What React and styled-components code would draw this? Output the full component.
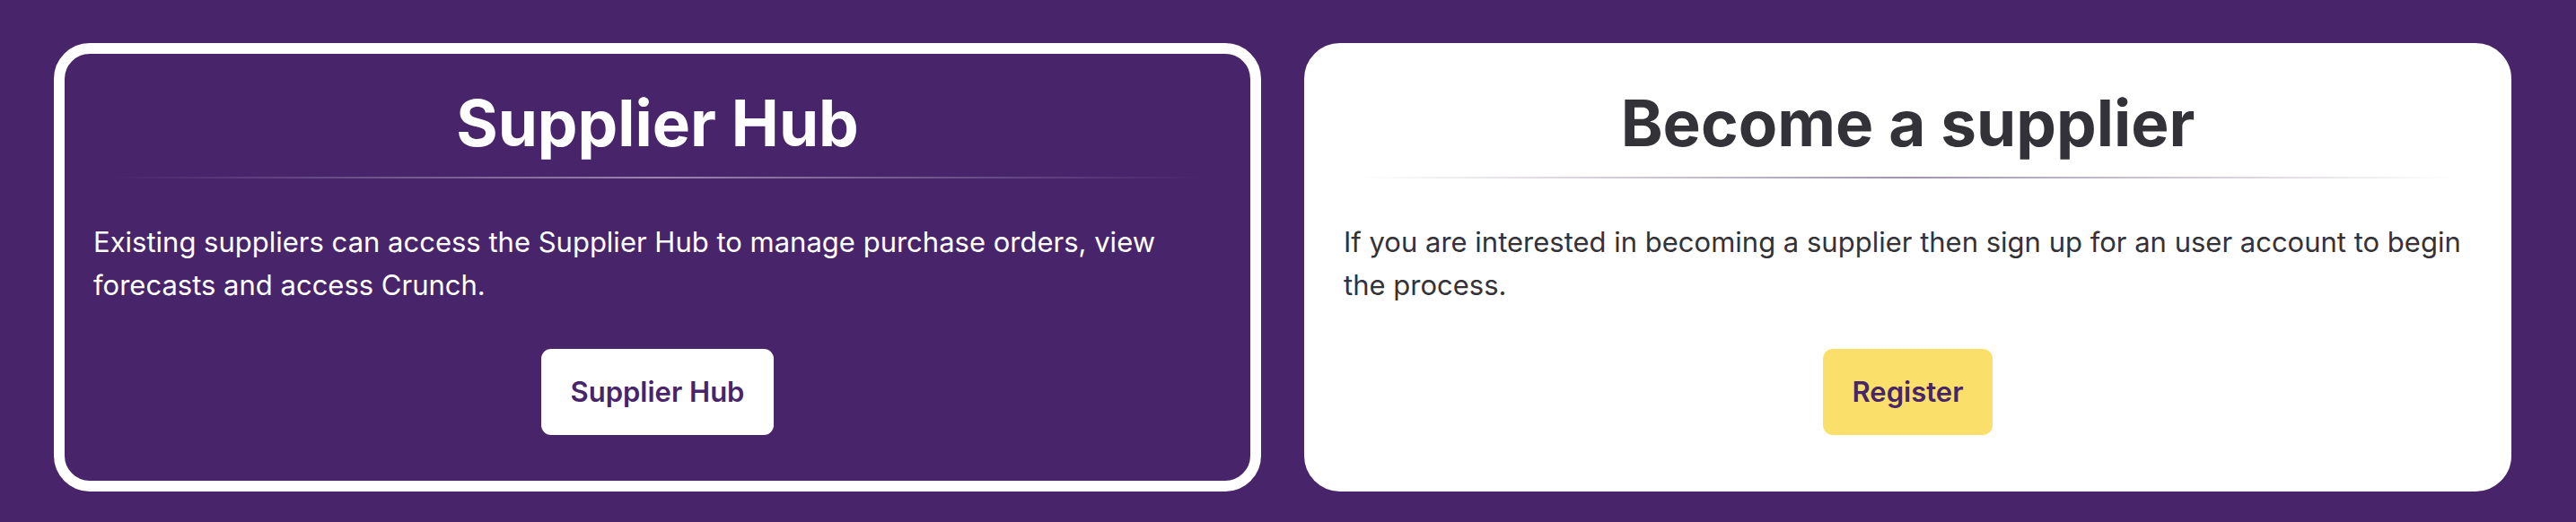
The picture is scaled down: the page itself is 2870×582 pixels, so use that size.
import styled, { createGlobalStyle } from 'styled-components';

const GlobalStyle = createGlobalStyle`
  html, body {
    margin: 0;
    padding: 0;
    background: #48246a;
  }
  body {
    font-family: Inter, "Noto Sans", "Liberation Sans", sans-serif;
  }
`;

const Page = styled.div`
  display: grid;
  grid-template-columns: 1fr 1fr;
  gap: 48px;
  padding: 48px 72px 34px 60px;
  width: 2870px;
  box-sizing: border-box;
  background: #48246a;
`;

const Card = styled.section`
  display: flex;
  flex-direction: column;
  box-sizing: border-box;
  height: 500px;
  padding: 32px;
  border: 12px solid #fff;
  border-radius: 40px;
  background: ${(p) => (p.$light ? '#fff' : '#48246a')};
  color: ${(p) => (p.$light ? '#333238' : '#fff')};
`;

const Title = styled.h2`
  margin: 0;
  font-size: 71px;
  line-height: 90px;
  font-weight: 700;
  text-align: center;
`;

const Divider = styled.div`
  height: 2px;
  margin: 15px 18px 0;
  background: linear-gradient(
    to right,
    transparent,
    ${(p) => (p.$light ? 'rgba(72, 36, 106, 0.5)' : 'rgba(255, 255, 255, 0.45)')},
    transparent
  );
`;

const Text = styled.p`
  margin: 47px 0 0;
  font-size: 31px;
  line-height: 48px;
  font-weight: 400;
`;

const Actions = styled.div`
  display: flex;
  justify-content: center;
  margin-top: 47px;
`;

const Button = styled.button`
  border: none;
  cursor: pointer;
  font-family: inherit;
  font-size: 31px;
  font-weight: 600;
  line-height: 48px;
  padding: 24px 33px;
  border-radius: 11px;
  color: #48246a;
  background: ${(p) => (p.$yellow ? '#fadf6b' : '#fff')};
`;

export default function App() {
  return (
    <>
      <GlobalStyle />
      <Page>
        <Card>
          <Title>Supplier Hub</Title>
          <Divider />
          <Text>
            Existing suppliers can access the Supplier Hub to manage purchase orders, view
            forecasts and access Crunch.
          </Text>
          <Actions>
            <Button>Supplier Hub</Button>
          </Actions>
        </Card>
        <Card $light>
          <Title>Become a supplier</Title>
          <Divider $light />
          <Text>
            If you are interested in becoming a supplier then sign up for an user account to begin
            the process.
          </Text>
          <Actions>
            <Button $yellow>Register</Button>
          </Actions>
        </Card>
      </Page>
    </>
  );
}
